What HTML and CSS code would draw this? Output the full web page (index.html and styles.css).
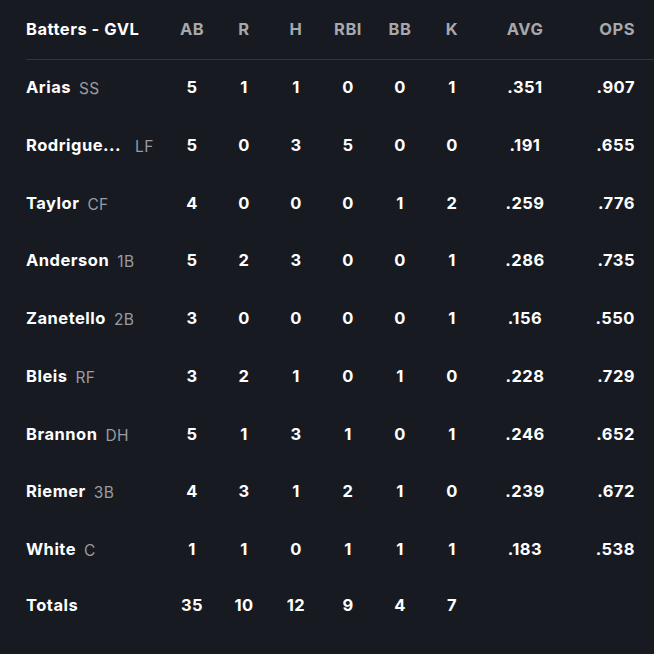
FILE: index.html
```html
<!DOCTYPE html>
<html>
<head>
<meta charset="utf-8">
<link rel="stylesheet" href="styles.css">
</head>
<body>
<div class="box">
  <div class="row head">
    <div class="name">Batters - GVL</div>
    <div class="c">AB</div><div class="c">R</div><div class="c">H</div><div class="c">RBI</div><div class="c">BB</div><div class="c">K</div>
    <div class="avg">AVG</div><div class="ops">OPS</div>
  </div>
  <div class="row"><div class="name"><span class="nm">Arias</span><span class="pos">SS</span></div><div class="c">5</div><div class="c">1</div><div class="c">1</div><div class="c">0</div><div class="c">0</div><div class="c">1</div><div class="avg">.351</div><div class="ops">.907</div></div>
  <div class="row"><div class="name"><span class="nm trunc">Rodrigue...</span><span class="pos">LF</span></div><div class="c">5</div><div class="c">0</div><div class="c">3</div><div class="c">5</div><div class="c">0</div><div class="c">0</div><div class="avg">.191</div><div class="ops">.655</div></div>
  <div class="row"><div class="name"><span class="nm">Taylor</span><span class="pos">CF</span></div><div class="c">4</div><div class="c">0</div><div class="c">0</div><div class="c">0</div><div class="c">1</div><div class="c">2</div><div class="avg">.259</div><div class="ops">.776</div></div>
  <div class="row"><div class="name"><span class="nm">Anderson</span><span class="pos">1B</span></div><div class="c">5</div><div class="c">2</div><div class="c">3</div><div class="c">0</div><div class="c">0</div><div class="c">1</div><div class="avg">.286</div><div class="ops">.735</div></div>
  <div class="row"><div class="name"><span class="nm">Zanetello</span><span class="pos">2B</span></div><div class="c">3</div><div class="c">0</div><div class="c">0</div><div class="c">0</div><div class="c">0</div><div class="c">1</div><div class="avg">.156</div><div class="ops">.550</div></div>
  <div class="row"><div class="name"><span class="nm">Bleis</span><span class="pos">RF</span></div><div class="c">3</div><div class="c">2</div><div class="c">1</div><div class="c">0</div><div class="c">1</div><div class="c">0</div><div class="avg">.228</div><div class="ops">.729</div></div>
  <div class="row"><div class="name"><span class="nm">Brannon</span><span class="pos">DH</span></div><div class="c">5</div><div class="c">1</div><div class="c">3</div><div class="c">1</div><div class="c">0</div><div class="c">1</div><div class="avg">.246</div><div class="ops">.652</div></div>
  <div class="row"><div class="name"><span class="nm">Riemer</span><span class="pos">3B</span></div><div class="c">4</div><div class="c">3</div><div class="c">1</div><div class="c">2</div><div class="c">1</div><div class="c">0</div><div class="avg">.239</div><div class="ops">.672</div></div>
  <div class="row"><div class="name"><span class="nm">White</span><span class="pos">C</span></div><div class="c">1</div><div class="c">1</div><div class="c">0</div><div class="c">1</div><div class="c">1</div><div class="c">1</div><div class="avg">.183</div><div class="ops">.538</div></div>
  <div class="row total"><div class="name"><span class="nm">Totals</span></div><div class="c">35</div><div class="c">10</div><div class="c">12</div><div class="c">9</div><div class="c">4</div><div class="c">7</div><div class="avg"></div><div class="ops"></div></div>
</div>
</body>
</html>
```
FILE: styles.css
```css
html, body {
  margin: 0;
  padding: 0;
  background: #171a21;
}
body {
  font-family: "Inter", "Liberation Sans", sans-serif;
  color: #ffffff;
  width: 654px;
  height: 654px;
  overflow: hidden;
}
.box {
  padding-left: 26px;
}
.row {
  display: grid;
  grid-template-columns: 140px 52px 52px 52px 52px 52px 52px 94px 63px;
  align-items: center;
  box-sizing: border-box;
  height: 57.75px;
  padding-bottom: 3.5px;
  font-size: 16.5px;
  font-weight: 700;
  letter-spacing: 0.5px;
}
.head {
  height: 60px;
  padding-bottom: 1px;
  border-bottom: 1px solid #30343b;
  color: #a6a8ad;
}
.head .name {
  color: #ffffff;
}
.c, .avg {
  text-align: center;
}
.ops {
  text-align: right;
}
.name {
  display: flex;
  align-items: baseline;
  white-space: nowrap;
}
.nm {
  font-weight: 700;
}
.trunc {
  padding-right: 6px;
}
.pos {
  margin-left: 8px;
  position: relative;
  top: 1px;
  font-weight: 400;
  font-size: 15.5px;
  letter-spacing: 0.4px;
  color: #9a9ca1;
}
.total {
  padding-bottom: 7px;
}
```
